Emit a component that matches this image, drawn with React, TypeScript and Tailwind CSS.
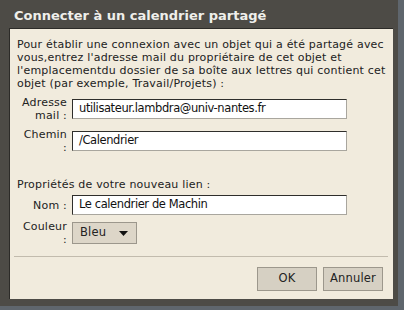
import React from "react";

function Field({ label, children }: { label: React.ReactNode; children: React.ReactNode }) {
  return (
    <div className="flex items-center gap-[5px]">
      <div className="w-[50px] text-right leading-[13px]">{label}</div>
      {children}
    </div>
  );
}

function TextInput({ value }: { value: string }) {
  return (
    <div className="w-[275px] h-[20px] bg-white border border-t-[#2f2e2b] border-l-[#2f2e2b] border-b-[#a9a69e] border-r-[#a9a69e] pl-[6px] flex items-center text-[11.5px] tracking-[-0.4px] text-[#111]">
      {value}
    </div>
  );
}

export default function App() {
  return (
    <div className="w-[404px] h-[310px] bg-[#5f666d] overflow-hidden font-['DejaVu_Sans',sans-serif]">
      <div className="w-[398px] h-[306px] bg-[#4d4b46] flex flex-col pl-[9px] pr-[5px] pb-[7px]">
        <div className="h-[28px] flex items-center pl-[5px] pt-[3px] text-[13px] font-bold text-[#efefeb]">
          Connecter à un calendrier partagé
        </div>
        <div className="flex-1 bg-[#f1ebdd] border-t border-l border-[#2c2b28] flex flex-col text-[11px] tracking-[0.2px] text-[#222] px-[7px] pt-[9px]">
          <p className="leading-[13px] whitespace-nowrap">
            Pour établir une connexion avec un objet qui a été partagé avec
            <br />
            vous,entrez l'adresse mail du propriétaire de cet objet et
            <br />
            l'emplacementdu dossier de sa boîte aux lettres qui contient cet
            <br />
            objet (par exemple, Travail/Projets) :
          </p>
          <div className="flex flex-col gap-[6px] mt-[6px]">
            <Field label={<>Adresse<br />mail :</>}>
              <TextInput value="utilisateur.lambdra@univ-nantes.fr" />
            </Field>
            <Field label={<>Chemin<br />:</>}>
              <TextInput value="/Calendrier" />
            </Field>
          </div>
          <p className="mt-[24px] leading-[13px]">Propriétés de votre nouveau lien :</p>
          <div className="flex flex-col gap-[5px] mt-[4px]">
            <Field label="Nom :">
              <TextInput value="Le calendrier de Machin" />
            </Field>
            <Field label={<>Couleur<br />:</>}>
              <div className="w-[65px] h-[22px] bg-[#ddd6c8] border border-[#9c978c] flex items-center justify-between pl-[7px] pr-[8px] text-[11.5px]">
                <span>Bleu</span>
                <svg width="9" height="5" viewBox="0 0 9 5">
                  <path d="M0 0 H9 L4.5 5 Z" fill="#111" />
                </svg>
              </div>
            </Field>
          </div>
          <div className="mt-[10px] h-px bg-[#c2bbad] -ml-[3px] -mr-[2px]" />
          <div className="flex justify-end gap-[6px] mt-[10px] pr-[3px]">
            <button className="w-[60px] h-[24px] bg-[#d6d0c3] border border-[#9c978c] text-[11.5px]">OK</button>
            <button className="w-[60px] h-[24px] bg-[#d6d0c3] border border-[#9c978c] text-[11.5px]">Annuler</button>
          </div>
        </div>
      </div>
    </div>
  );
}
